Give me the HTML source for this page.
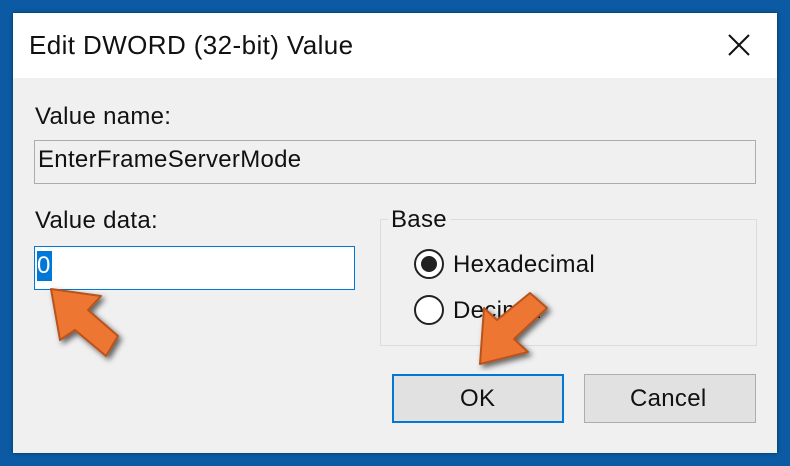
<!DOCTYPE html>
<html><head><style>
body{margin:0;width:790px;height:466px;background:#0b5aa3;position:relative;overflow:hidden;font-family:"Liberation Sans",sans-serif;}
.dlg{position:absolute;left:13px;top:13px;width:764px;height:440px;background:#f0f0f0;box-shadow:0 0 3px #034;}
.title{position:absolute;left:0;top:0;width:764px;height:65px;background:#fff;}
.t{position:absolute;font-size:24px;color:#111;letter-spacing:0.3px;}
.box{position:absolute;box-sizing:border-box;}
</style></head><body>
<div class="dlg">
<div class="title"></div>
</div>
<div class="t" style="left:29px;top:30px;font-size:26px;letter-spacing:0.4px">Edit DWORD (32-bit) Value</div>
<svg style="position:absolute;left:727px;top:33px" width="24" height="24"><path d="M2 2L22 22M22 2L2 22" stroke="#111" stroke-width="2"/></svg>
<div class="t" style="left:35px;top:103px;">Value name:</div>
<div class="box" style="left:34px;top:140px;width:722px;height:44px;border:1px solid #adadad;background:#f0f0f0"></div>
<div class="t" style="left:38px;top:146px;">EnterFrameServerMode</div>
<div class="t" style="left:35px;top:207px;">Value data:</div>
<div class="box" style="left:34px;top:246px;width:321px;height:44px;border:1px solid #0078d7;background:#fff"></div>
<div style="position:absolute;left:37px;top:251px;width:15px;height:30px;background:#0078d7;color:#fff;font-size:24px;line-height:30px">0</div>
<div class="box" style="left:380px;top:219px;width:377px;height:127px;border:1px solid #dcdcdc"></div>
<div class="t" style="left:388px;top:206px;background:#f0f0f0;padding:0 3px">Base</div>
<svg style="position:absolute;left:413px;top:248px" width="32" height="32"><circle cx="16" cy="16" r="14" fill="#fff" stroke="#222" stroke-width="2"/><circle cx="16" cy="16" r="8" fill="#222"/></svg>
<div class="t" style="left:453px;top:251px;">Hexadecimal</div>
<svg style="position:absolute;left:413px;top:294px" width="32" height="32"><circle cx="16" cy="16" r="14" fill="#fff" stroke="#222" stroke-width="2"/></svg>
<div class="t" style="left:453px;top:297px;">Decimal</div>
<div class="box" style="left:392px;top:374px;width:172px;height:49px;border:2px solid #0078d7;background:#e1e1e1"></div>
<div class="t" style="left:460px;top:385px;">OK</div>
<div class="box" style="left:584px;top:374px;width:172px;height:49px;border:1px solid #adadad;background:#e1e1e1"></div>
<div class="t" style="left:630px;top:385px;">Cancel</div>
<svg style="position:absolute;left:0;top:0" width="790" height="466">
<defs><filter id="s"><feDropShadow dx="3" dy="3" stdDeviation="3" flood-opacity="0.6"/></filter></defs>
<g filter="url(#s)" fill="#ed7630" stroke="#b8521c" stroke-width="2" stroke-linejoin="round">
<polygon points="51,289 101,296 88,310 118,336 106,356 75,330 60,340"/>
<polygon points="480,364 484,308 497,320 530,293 547,308 514,339 528,352"/>
</g></svg>
</body></html>
